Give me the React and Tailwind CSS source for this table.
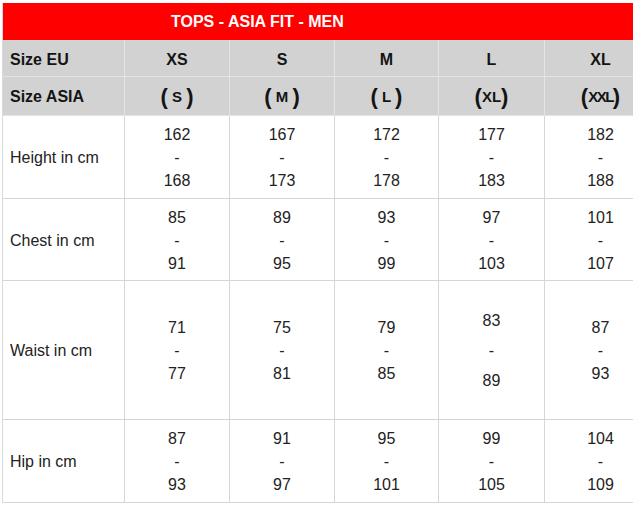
import React from "react";

const cols = ["w-[122px]", "w-[105px]", "w-[105px]", "w-[104px]", "w-[106px]", "w-[112px]"];

const eu = ["XS", "S", "M", "L", "XL"];
const asia = [
  ["(", " S ", ")"],
  ["(", " M ", ")"],
  ["(", " L ", ")"],
  ["(", "XL", ")"],
  ["(", "XXL", ")"],
];

const rows = [
  { label: "Height in cm", h: "h-[83px]", vals: [["162", "168"], ["167", "173"], ["172", "178"], ["177", "183"], ["182", "188"]] },
  { label: "Chest in cm", h: "h-[82px]", vals: [["85", "91"], ["89", "95"], ["93", "99"], ["97", "103"], ["101", "107"]] },
  { label: "Waist in cm", h: "h-[139px]", vals: [["71", "77"], ["75", "81"], ["79", "85"], ["83", "89"], ["87", "93"]], wide: 3 },
  { label: "Hip in cm", h: "h-[83px]", vals: [["87", "93"], ["91", "97"], ["95", "101"], ["99", "105"], ["104", "109"]] },
];

export default function App() {
  return (
    <div
      className="w-[633px] h-[508px] overflow-hidden bg-white pt-[3px] pl-[2px]"
      style={{ fontFamily: '"Liberation Sans", Arial, sans-serif' }}
    >
      <div className="w-[656px] border-l border-[#d9d9d9]">
        <div className="h-[37px] bg-[#fe0000] flex items-center pl-[168px] pt-[1px] text-white font-bold text-[16px]">
          TOPS - ASIA FIT - MEN
        </div>
        <div className="flex h-[37px] bg-[#d2d2d2] border-b border-[#e4e4e4] text-[16px] font-bold text-[#141414]">
          <div className={`${cols[0]} border-r border-[#e4e4e4] flex items-center pl-[7px] pt-[3px]`}>Size EU</div>
          {eu.map((s, i) => (
            <div key={s} className={`${cols[i + 1]} border-r border-[#e4e4e4] flex items-center justify-center pt-[3px]`}>
              {s}
            </div>
          ))}
        </div>
        <div className="flex h-[39px] bg-[#d2d2d2] border-b border-[#e4e4e4] font-bold text-[#141414]">
          <div className={`${cols[0]} border-r border-[#e4e4e4] flex items-center pl-[7px] pt-[2px] text-[16px]`}>Size ASIA</div>
          {asia.map((a, i) => (
            <div key={i} className={`${cols[i + 1]} border-r border-[#e4e4e4] flex items-center justify-center pt-[1px]`}>
              <span className="text-[22px] leading-none">{a[0]}</span>
              <span
                className={`text-[15px] leading-none whitespace-pre ${a[1] === "XXL" ? "tracking-[-1.5px]" : ""}`}
              >
                {a[1]}
              </span>
              <span className="text-[22px] leading-none">{a[2]}</span>
            </div>
          ))}
        </div>
        {rows.map((r) => (
          <div key={r.label} className={`flex ${r.h} border-b border-[#d6d6d6] text-[16px] text-[#222]`}>
            <div className={`${cols[0]} border-r border-[#d6d6d6] flex items-center pl-[7px] pt-[2px]`}>{r.label}</div>
            {r.vals.map((v, i) => (
              <div
                key={i}
                className={`${cols[i + 1]} border-r border-[#d6d6d6] flex flex-col items-center justify-center pt-[1px] ${
                  r.wide === i ? "leading-[30px]" : "leading-[23px]"
                }`}
              >
                <span>{v[0]}</span>
                <span>-</span>
                <span>{v[1]}</span>
              </div>
            ))}
          </div>
        ))}
      </div>
    </div>
  );
}
